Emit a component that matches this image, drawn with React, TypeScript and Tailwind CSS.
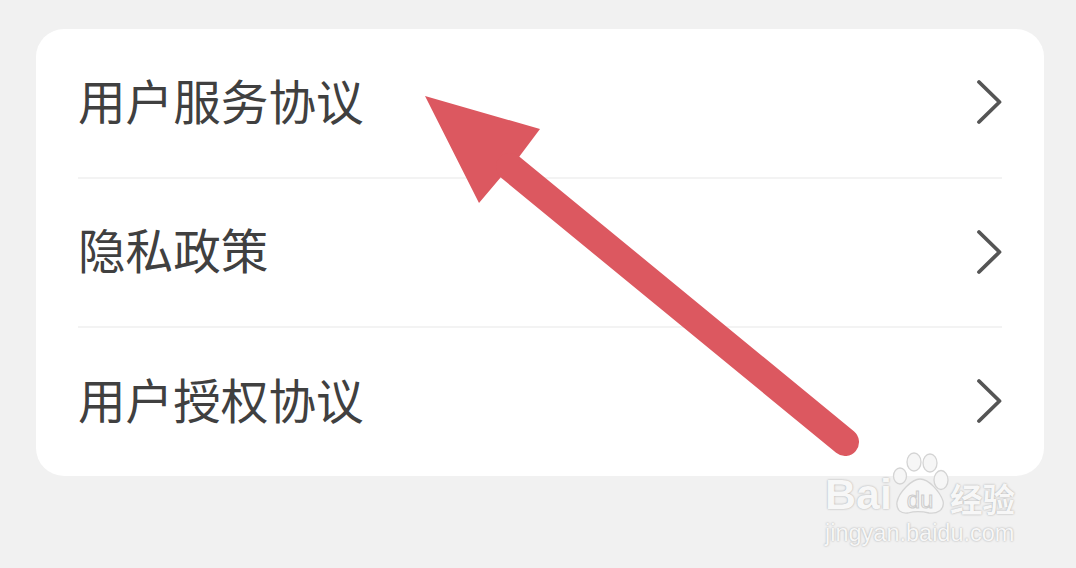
import React from "react";

const rows = ["用户服务协议", "隐私政策", "用户授权协议"];

const Chevron = () => (
  <svg width="26" height="46" viewBox="0 0 26 46" fill="none" className="shrink-0 -mt-[2px]">
    <path d="M3 3 L23.5 23 L3 43" stroke="#555555" strokeWidth="3.8" strokeLinecap="round" strokeLinejoin="round" />
  </svg>
);

const Arrow = () => (
  <svg width="1076" height="568" viewBox="0 0 1076 568" className="absolute left-0 top-0">
    <path d="M425 96 L540 129 L519 157 L501 177 L479 203 Z" fill="#dc5860" />
    <line x1="510" y1="167" x2="845" y2="442" stroke="#dc5860" strokeWidth="28" strokeLinecap="round" />
  </svg>
);

const Paw = () => (
  <svg width="60" height="64" viewBox="0 0 60 64" fill="#f6f6f6" stroke="#d4d4d4" strokeWidth="1.3" className="shrink-0 -mx-[1px]">
    <ellipse cx="9" cy="24" rx="6.5" ry="8" />
    <ellipse cx="23" cy="10" rx="7" ry="9" />
    <ellipse cx="39" cy="11" rx="7" ry="9" />
    <ellipse cx="50" cy="28" rx="7" ry="9.5" />
    <path d="M6 50 C8 40 21 27 29 27 C38 27 49 40 52 49 C54 58 46 62 38 61 C30 59 24 59 17 61 C10 62 5 58 6 50 Z" />
    <text x="29" y="56" textAnchor="middle" fontSize="24" fill="#f2f2f2" stroke="#cdcdcd" strokeWidth="1" fontFamily="Liberation Sans, sans-serif">du</text>
  </svg>
);

const Watermark = () => (
  <div className="absolute left-[825px] top-[452px] w-[196px] flex flex-col font-['Liberation_Sans',sans-serif] text-[#f7f7f7]">
    <div className="flex items-end h-[64px]">
      <span className="text-[43px] leading-[48px] font-bold -mb-[2px] [text-shadow:0_0_2px_#a0a0a0]">Bai</span>
      <Paw />
      <span className="text-[32.5px] leading-[38px] -mb-[1px] font-['Noto_Sans_CJK_SC',sans-serif] font-bold [text-shadow:0_0_2px_#a0a0a0]">经验</span>
    </div>
    <span className="mt-[3px] text-[23.5px] leading-[28px] whitespace-nowrap [text-shadow:0_0_2px_#a0a0a0]">jingyan.baidu.com</span>
  </div>
);

export default function App() {
  return (
    <div className="relative w-[1076px] h-[568px] overflow-hidden bg-[#f1f1f1] pt-[29px] pl-[36px] font-['Noto_Sans_CJK_SC','Noto_Sans',sans-serif]">
      <div className="w-[1008px] h-[447px] bg-white rounded-[28px] px-[42px] flex flex-col">
        {rows.map((row, index) => (
          <div
            key={index}
            className={
              index < 2
                ? "flex flex-1 items-center justify-between border-b-2 border-[#f3f3f3]"
                : "flex flex-1 items-center justify-between"
            }
          >
            <span className="text-[47.6px] leading-none text-[#404040] -mt-[7px]">{row}</span>
            <Chevron />
          </div>
        ))}
      </div>
      <Arrow />
      <Watermark />
    </div>
  );
}
